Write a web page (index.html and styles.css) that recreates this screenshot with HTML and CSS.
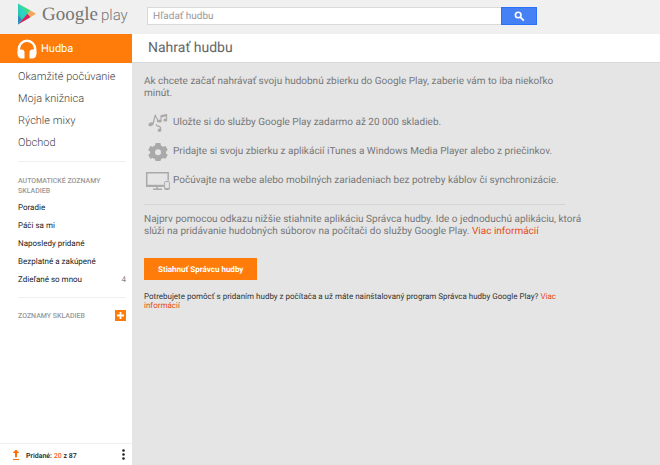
FILE: index.html
```html
<!DOCTYPE html>
<html lang="sk">
<head>
    <title>Nahrať hudbu - Google Play</title>
    <meta charset="UTF-8">
    <meta name="viewport" content="width=device-width, initial-scale=1">
    <link rel="stylesheet" href="styles.css">
</head>
<body>
    <header class="topbar">
        <a href="#" class="logo">
            <svg class="logo-icon" width="20" height="22" viewBox="0 0 20 22">
                <path d="M1 0.5L11 10.8L1 21.5Z" fill="#2fc4b2"/>
                <path d="M1 0.5L13.5 7.5L10.5 10.8Z" fill="#3fdc84"/>
                <path d="M1 0.5L10.5 10.8L5 16.8Z" fill="#2bd3c4"/>
                <path d="M13.5 7.5L19 10.8L13.5 14.3L10.5 10.8Z" fill="#f8a55b"/>
                <path d="M10.5 10.8L13.5 14.3L1 21.5Z" fill="#d5235c"/>
                <path d="M1 12L5 16.8L1 21.5Z" fill="#2b8fc0"/>
            </svg>
            <span class="logo-google">Google</span>
            <span class="logo-play">play</span>
        </a>
        <form class="search">
            <input type="text" class="search-input" aria-label="Hľadať hudbu" placeholder="Hľadať hudbu">
            <button type="submit" class="search-btn" aria-label="Hľadať">
                <svg width="11" height="11" viewBox="0 0 11 11" fill="none" stroke="#fff">
                    <circle cx="4.2" cy="4" r="2.8" stroke-width="1.6"/>
                    <path d="M6.3 6.1L9.8 9.6" stroke-width="1.9"/>
                </svg>
            </button>
        </form>
    </header>

    <div class="layout">
        <aside class="sidebar">
            <a href="#" class="section">
                <svg width="20" height="20" viewBox="0 0 20 20">
                    <path d="M1.8 15V10.2A8.2 8.4 0 0 1 18.2 10.2V15" fill="none" stroke="#fff" stroke-width="2.4"/>
                    <path d="M1 10.5H4.5Q7.5 10.5 7.5 13.5V19.5H5Q0.6 19.5 0.6 14.5Z" fill="#fff"/>
                    <path d="M19 10.5H15.5Q12.5 10.5 12.5 13.5V19.5H15Q19.4 19.5 19.4 14.5Z" fill="#fff"/>
                </svg>
                <span>Hudba</span>
            </a>

            <nav class="menu">
                <a href="#">Okamžité počúvanie</a>
                <a href="#">Moja knižnica</a>
                <a href="#">Rýchle mixy</a>
                <a href="#">Obchod</a>
            </nav>

            <!-- Automatické zoznamy -->
            <div class="lists">
                <h2>AUTOMATICKÉ ZOZNAMY SKLADIEB</h2>
                <a href="#">Poradie</a>
                <a href="#">Páči sa mi</a>
                <a href="#">Naposledy pridané</a>
                <a href="#">Bezplatné a zakúpené</a>
                <a href="#">Zdieľané so mnou <span class="count">4</span></a>
            </div>

            <div class="playlists">
                <h2>ZOZNAMY SKLADIEB</h2>
                <button class="add-btn" aria-label="Pridať zoznam">
                    <svg width="11" height="11" viewBox="0 0 11 11">
                        <path d="M5.5 2V9M2 5.5H9" stroke="#fff" stroke-width="1.8"/>
                    </svg>
                </button>
            </div>

            <!-- Stav nahrávania -->
            <div class="status">
                <svg width="8" height="12" viewBox="0 0 8 12" fill="#ff6d00">
                    <path d="M4 0.5L7.3 4H5V8.2H3V4H0.7Z"/>
                    <path d="M1 10H7V11H1Z"/>
                </svg>
                <span>Pridané: <b>20</b> z 87</span>
                <button class="more-btn" aria-label="Viac možností">
                    <svg width="3" height="11" viewBox="0 0 3 11" fill="#222">
                        <circle cx="1.5" cy="1.5" r="1.3"/>
                        <circle cx="1.5" cy="5.5" r="1.3"/>
                        <circle cx="1.5" cy="9.5" r="1.3"/>
                    </svg>
                </button>
            </div>
        </aside>

        <main class="main">
            <h1>Nahrať hudbu</h1>
            <div class="content">
                <p class="lead">Ak chcete začať nahrávať svoju hudobnú zbierku do Google Play, zaberie vám to iba niekoľko minút.</p>
                <ul class="features">
                    <li>
                        <svg width="26" height="20" viewBox="0 0 26 20" fill="#a9a9a9" stroke="#a9a9a9">
                            <ellipse cx="7" cy="11.2" rx="2.7" ry="1.8" transform="rotate(-15 7 11.2)" stroke="none"/>
                            <path d="M9 10.8L11.3 1.8Q11.5 4.5 13.5 6.2Q14 7.6 13.3 9" fill="none" stroke-width="1.3"/>
                            <path d="M17 7.5V2.7L22.6 1.6V6.5" fill="none" stroke-width="1.1"/>
                            <path d="M17 2.4L23 1.3V3.3L17 4.4Z" stroke="none"/>
                            <ellipse cx="15.8" cy="7.9" rx="2" ry="1.5" stroke="none"/>
                            <ellipse cx="21.3" cy="6.9" rx="2" ry="1.5" stroke="none"/>
                            <path d="M12 11.5Q13 13.3 15.5 13.5Q17.2 14.3 16.3 17" fill="none" stroke-width="1.3"/>
                            <circle cx="15.5" cy="17.3" r="1.8" stroke="none"/>
                        </svg>
                        <span>Uložte si do služby Google Play zadarmo až 20 000 skladieb.</span>
                    </li>
                    <li>
                        <svg width="26" height="20" viewBox="0 0 26 20" fill="#a9a9a9">
                            <path fill-rule="evenodd" d="M11.6 1H16.4L17 3.6L19.1 4.8L21.6 4L23.8 7.9L21.9 9.8V11.2L23.8 13L21.6 16.8L19.1 16L17 17.2L16.4 19H11.6L11 17.2L8.9 16L6.4 16.8L4.2 13L6.1 11.2V9.8L4.2 7.9L6.4 4L8.9 4.8L11 3.6ZM14 7.2A3 3 0 1 0 14 13.2A3 3 0 1 0 14 7.2Z"/>
                        </svg>
                        <span>Pridajte si svoju zbierku z aplikácií iTunes a Windows Media Player alebo z priečinkov.</span>
                    </li>
                    <li>
                        <svg width="26" height="20" viewBox="0 0 26 20" fill="none" stroke="#a9a9a9">
                            <path d="M19 15H2.7V1.8H24.2V9.5" stroke-width="1.5"/>
                            <path d="M2 14.8H20" stroke-width="2"/>
                            <path d="M13 15V18M9 18.3H18" stroke-width="1.5"/>
                            <rect x="20.6" y="10.5" width="4.8" height="8" rx="0.8" stroke-width="1"/>
                            <path d="M20.6 17.5H25.4" stroke-width="1"/>
                        </svg>
                        <span>Počúvajte na webe alebo mobilných zariadeniach bez potreby káblov či synchronizácie.</span>
                    </li>
                </ul>
                <p class="intro">Najprv pomocou odkazu nižšie stiahnite aplikáciu Správca hudby. Ide o jednoduchú aplikáciu, ktorá slúži na pridávanie hudobných súborov na počítači do služby Google Play. <a href="#">Viac informácií</a></p>
                <button class="download-btn">Stiahnuť Správcu hudby</button>
                <p class="help">Potrebujete pomôcť s pridaním hudby z počítača a už máte nainštalovaný program Správca hudby Google Play? <a href="#">Viac informácií</a></p>
            </div>
        </main>
    </div>
</body>
</html>
```
FILE: styles.css
```css
* { box-sizing: border-box; }
body { font-family: Roboto, Arial, sans-serif; text-rendering: geometricPrecision; margin: 0; min-height: 100vh; display: flex; flex-direction: column; background: #e5e5e5; color: #333; }
a { text-decoration: none; color: #e64a19; }
button { border: none; padding: 0; font-family: inherit; text-rendering: inherit; cursor: pointer; }
svg { display: block; flex: none; }
h1, h2, p, ul { margin: 0; padding: 0; }

.topbar { display: flex; align-items: flex-start; height: 34px; background: #f0f0f0; }
.logo { display: flex; align-items: baseline; width: 147px; padding-left: 17px; color: #757575; flex: none; }
.logo-icon { align-self: flex-start; margin-top: 3px; }
.logo-google { font-family: "Liberation Serif", serif; font-size: 19px; line-height: 30px; margin-left: 5px; }
.logo-play { font-size: 15px; font-weight: 300; margin-left: 3px; }
.search { display: flex; flex: 1; max-width: 390px; height: 18px; margin-top: 7px; margin-right: 16px; }
.search-input { flex: 1; min-width: 0; padding: 0 5px; border: 1px solid #d9d9d9; border-right: none; background: #fff; font-family: inherit; text-rendering: inherit; font-size: 10px; color: #333; }
.search-input::placeholder { color: #999; opacity: 1; }
.search-btn { display: flex; align-items: center; justify-content: center; width: 36px; background: #4580f5; border: 1px solid #2a70f8; }

.layout { display: flex; flex: 1; }

.sidebar { display: flex; flex-direction: column; width: 132px; flex: none; background: #fff; }
.section { display: flex; align-items: center; gap: 4px; height: 29px; padding-left: 17px; background: #ff7b0a; color: #fff; font-size: 11px; }
.menu { display: flex; flex-direction: column; margin: 0 6px 0 18px; padding: 3px 0 7px; border-bottom: 1px solid #f0f0f0; }
.menu a { font-size: 11px; line-height: 22px; font-weight: 300; color: #444; }
.sidebar h2 { font-size: 7px; line-height: 10px; font-weight: 500; color: #999; }
.lists { display: flex; flex-direction: column; margin: 0 6px 0 18px; padding: 14px 0 8px; border-bottom: 1px solid #f0f0f0; }
.lists h2 { margin-bottom: 3px; }
.lists a { display: flex; justify-content: space-between; font-size: 8px; line-height: 18px; color: #222; }
.lists .count { color: #888; }
.playlists { display: flex; align-items: center; justify-content: space-between; margin: 12px 6px 0 18px; }
.add-btn { background: #ff7b0a; }
.status { display: flex; align-items: center; gap: 6px; height: 22px; margin-top: auto; padding: 0 7px 0 12px; border-top: 1px solid #eee; font-size: 7px; font-weight: 500; color: #222; }
.status span { padding-top: 2px; }
.status b { font-weight: 500; color: #ff5a1f; }
.more-btn { margin-left: auto; background: none; }

.main { flex: 1; min-width: 0; }
.main h1 { height: 29px; padding-left: 16px; background: #fff; border-bottom: 1px solid #d8d8d8; font-size: 14px; line-height: 29px; font-weight: 400; color: #666; }
.content { max-width: 464px; padding: 13px 12px; font-size: 10px; line-height: 12px; color: #777; }
.lead, .features, .help { max-width: 421px; }
.features { list-style: none; padding: 8px 0 9px; border-bottom: 1px solid #d4d4d4; }
.features li { display: flex; align-items: center; gap: 3px; height: 29px; }
.intro { margin-top: 9px; }
.download-btn { margin: 20px 0 12px; height: 22px; padding: 0 14px; background: #ff7b0a; color: #fff; font-size: 8px; font-weight: 700; }
.help { font-size: 8px; line-height: 9px; color: #333; }
```
